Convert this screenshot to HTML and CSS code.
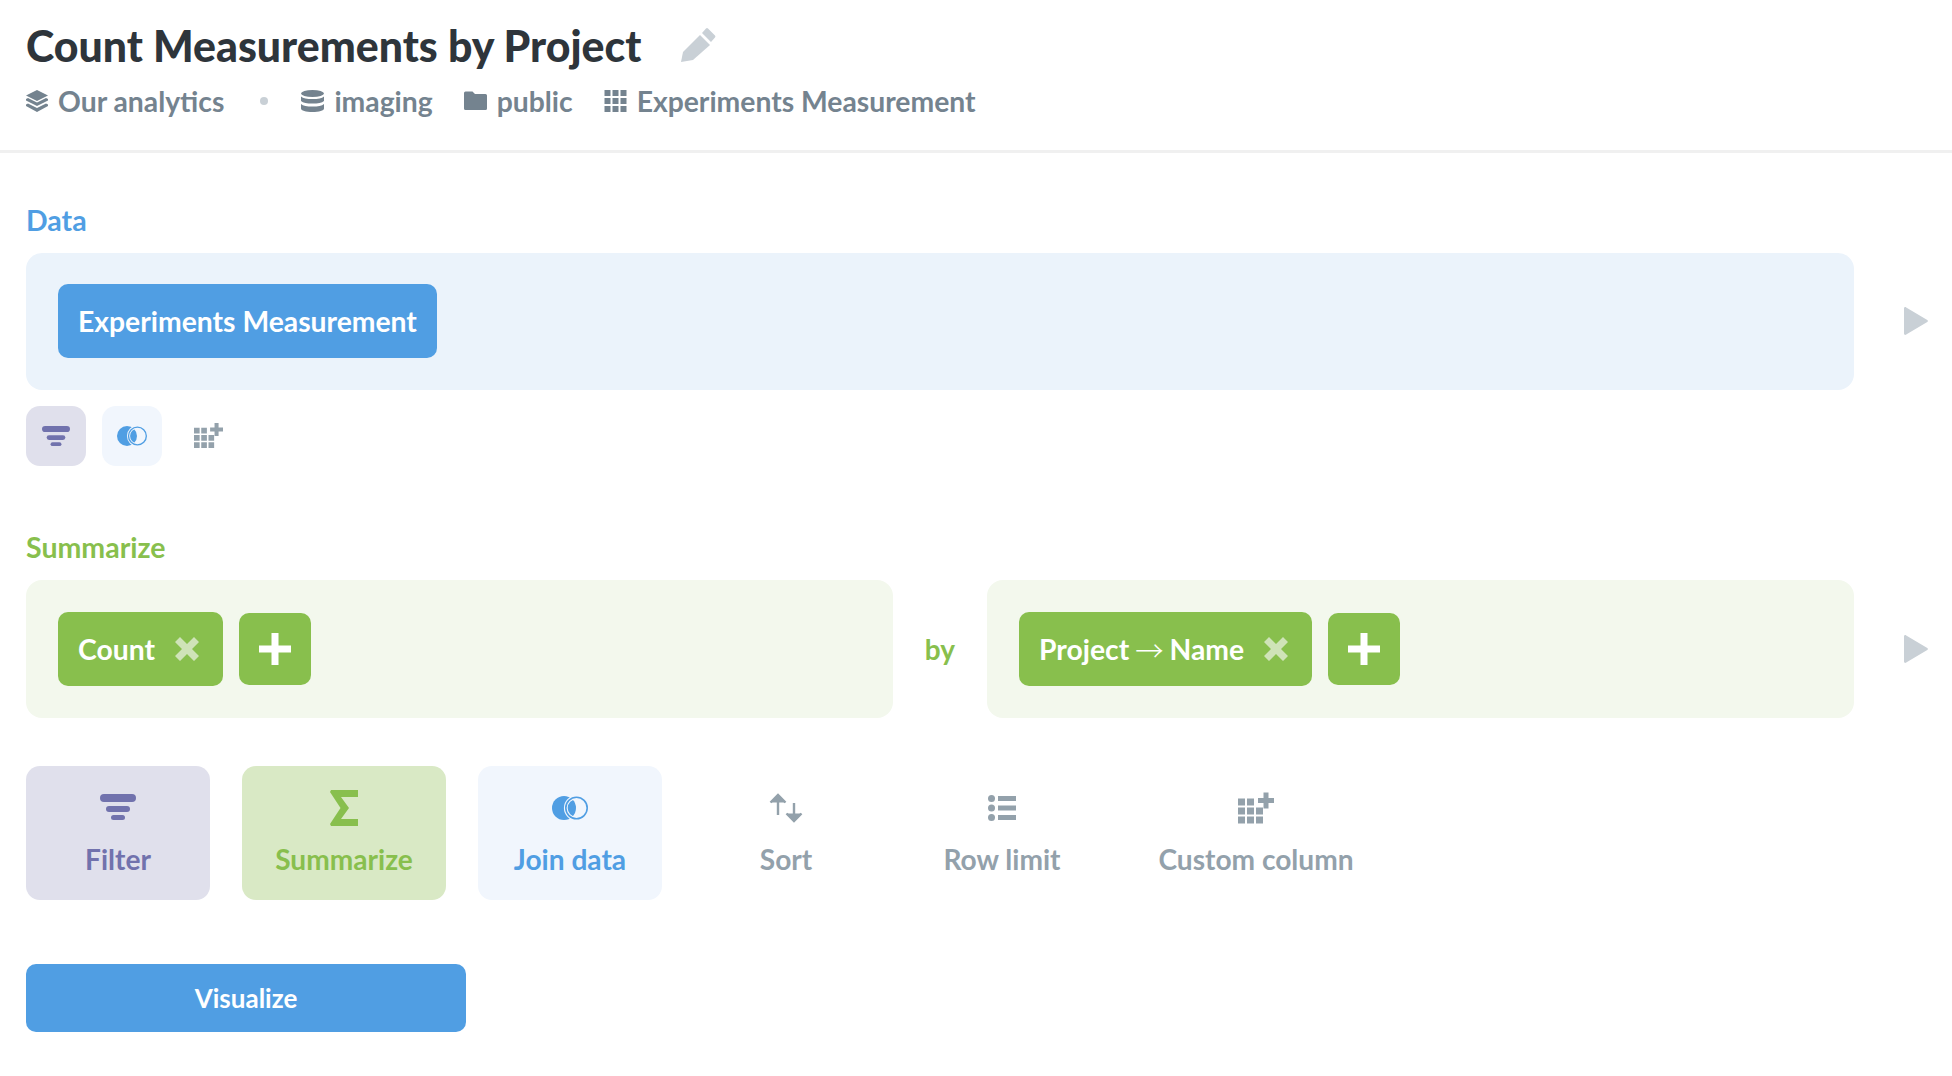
FILE: index.html
```html
<!DOCTYPE html>
<html lang="en">
<head>
<meta charset="utf-8">
<title>Count Measurements by Project</title>
<link rel="stylesheet" href="styles.css">
</head>
<body>
<svg class="defs" width="0" height="0" aria-hidden="true">
  <defs>
    <mask id="join-gap" maskUnits="userSpaceOnUse" x="0" y="0" width="36" height="24"><rect width="36" height="24" fill="#fff"/><circle cx="24.500" cy="12" r="10.700" fill="none" stroke="#000" stroke-width="3.800"/></mask>
    <symbol id="i-filter" viewBox="0 0 36 26"><rect x="0" y="0" width="36" height="8" rx="4"/><rect x="6" y="12" width="24" height="6" rx="3"/><rect x="11" y="21" width="14" height="5" rx="2.5"/></symbol>
    <symbol id="i-join" viewBox="0 0 36 24"><circle cx="12" cy="12" r="12" mask="url(#join-gap)"/><circle cx="24.500" cy="12" r="10.700" fill="none" stroke="currentColor" stroke-width="1.600"/></symbol>
    <symbol id="i-addcol" viewBox="0 0 36 31"><path d="M0 6h7v7H0zM9 6h7v7H9zM0 15h7v7H0zM9 15h7v7H9zM18 15h7v7h-7zM0 24h7v7H0zM9 24h7v7H9zM18 24h7v7h-7z"/><path d="M20 5.500h5.500V0h5v5.500H36v5h-5.500V16h-5v-5.500H20z"/></symbol>
    <symbol id="i-x" viewBox="0 0 24 24"><path d="M5 0L12 7 19 0 24 5 17 12 24 19 19 24 12 17 5 24 0 19 7 12 0 5z"/></symbol>
    <symbol id="i-plus" viewBox="0 0 32 32"><path d="M12.500 0h7v12.500H32v7H19.500V32h-7V19.500H0v-7h12.500z"/></symbol>
    <symbol id="i-play" viewBox="0 0 24 28"><path d="M0 1.500C0 .2 1.300-.4 2.200 .5L23.300 13a1.300 1.300 0 0 1 0 2L2.200 27.500C1.300 28.400 0 27.800 0 26.500z"/></symbol>
  </defs>
</svg>

<header class="head">
  <div class="title-row">
    <h1 class="title">Count Measurements by Project</h1>
    <svg class="pencil" viewBox="0 0 36 36"><path d="M1 35l2-10L20 8l10 10-17 15z"/><path d="M22 6l4-4.500a1.500 1.500 0 0 1 2 0l7 7a1.500 1.500 0 0 1 0 2L31 15z"/></svg>
  </div>
  <div class="crumbs">
    <span class="crumb crumb-db">
      <svg class="ci ci-first" viewBox="0 0 22 22"><path d="M11 0l11 5.500L11 11 0 5.500z"/><path d="M0 9l2-1 9 4.500L20 8l2 1v1.500L11 16 0 10.500z"/><path d="M0 14.500l2-1 9 4.500 9-4.500 2 1V16l-11 6-11-6z"/></svg>
      Our analytics
    </span>
    <span class="dot"></span>
    <span class="crumb">
      <svg class="ci" viewBox="0 0 23 22"><ellipse cx="11.500" cy="3.500" rx="11.500" ry="3.500"/><path d="M0 6.500c2 2 6 2.500 11.500 2.500S21 8.500 23 6.500V11c-2 2-6 2.500-11.500 2.500S2 13 0 11z"/><path d="M0 14c2 2 6 2.500 11.500 2.500S21 16 23 14v4.500c0 2-5 3.500-11.500 3.500S0 20.500 0 18.500z"/></svg>
      imaging
    </span>
    <span class="crumb">
      <svg class="ci" viewBox="0 0 23 22"><path d="M0 3a1.500 1.500 0 0 1 1.500-1.500h7l2.500 2.500h10.500A1.500 1.500 0 0 1 23 5.500v13a1.500 1.500 0 0 1-1.500 1.500h-20A1.500 1.500 0 0 1 0 18.500z"/></svg>
      public
    </span>
    <span class="crumb">
      <svg class="ci" viewBox="0 0 22 22"><path d="M0 0h6v6H0zM8 0h6v6H8zM16 0h6v6h-6zM0 8h6v6H0zM8 8h6v6H8zM16 8h6v6h-6zM0 16h6v6H0zM8 16h6v6H8zM16 16h6v6h-6z"/></svg>
      Experiments Measurement
    </span>
  </div>
</header>

<main class="body">
  <section class="step">
    <div class="step-label label-data c-blue">Data</div>
    <div class="step-row">
      <div class="panel p-blue">
        <button class="pill b-blue">Experiments Measurement</button>
      </div>
      <svg class="play"><use href="#i-play"/></svg>
    </div>
    <div class="mini-row">
      <span class="mini t-purple c-purple"><svg class="mi-filter"><use href="#i-filter"/></svg></span>
      <span class="mini t-blue c-blue"><svg class="mi-join"><use href="#i-join"/></svg></span>
      <span class="mini c-gray"><svg class="mi-add"><use href="#i-addcol"/></svg></span>
    </div>
  </section>

  <section class="step step-sum">
    <div class="step-label c-green">Summarize</div>
    <div class="step-row">
      <div class="sum-grid">
        <div class="panel p-green">
          <button class="pill b-green">Count<svg class="x"><use href="#i-x"/></svg></button>
          <button class="add b-green"><svg class="plus"><use href="#i-plus"/></svg></button>
        </div>
        <div class="by c-green">by</div>
        <div class="panel p-green">
          <button class="pill b-green">Project<span class="arrow">→</span>Name<svg class="x"><use href="#i-x"/></svg></button>
          <button class="add b-green"><svg class="plus"><use href="#i-plus"/></svg></button>
        </div>
      </div>
      <svg class="play"><use href="#i-play"/></svg>
    </div>
  </section>

  <div class="actions">
    <div class="action t-purple c-purple w-filter"><svg class="ai-filter"><use href="#i-filter"/></svg><span>Filter</span></div>
    <div class="action t-green c-green w-sum">
      <svg class="ai-sigma" viewBox="0 0 28 36"><path d="M1 0h27v7H11l8 11-8 11h17v7H1l-1-2L10.500 18 0 2z"/></svg>
      <span>Summarize</span>
    </div>
    <div class="action t-blue c-blue w-join"><svg class="ai-join"><use href="#i-join"/></svg><span>Join data</span></div>
    <div class="action c-gray w-sort">
      <svg class="ai-sort" viewBox="0 0 34 36" fill="none" stroke="currentColor" stroke-width="2.400"><path d="M9 23V3M1.500 10.500L9 3l7.500 7.500"/><path d="M25 11v18M17.500 21.500L25 29l7.500-7.500"/></svg>
      <span>Sort</span>
    </div>
    <div class="action c-gray w-limit">
      <svg class="ai-list" viewBox="0 0 28 26"><circle cx="3.500" cy="3.500" r="3.500"/><circle cx="3.500" cy="13" r="3.500"/><circle cx="3.500" cy="22.500" r="3.500"/><path d="M10 1h18v5H10zM10 10.500h18v5H10zM10 20h18v5H10z"/></svg>
      <span>Row limit</span>
    </div>
    <div class="action c-gray w-col"><svg class="ai-add"><use href="#i-addcol"/></svg><span>Custom column</span></div>
  </div>

  <button class="visualize">Visualize</button>
</main>
</body>
</html>
```

FILE: styles.css
```css
* { box-sizing: border-box; }
html, body { margin: 0; padding: 0; }
body {
  width: 1952px;
  height: 1076px;
  overflow: hidden;
  background: #fff;
  font-family: Lato, "Noto Sans", sans-serif;
  font-weight: 700;
}
button { font: inherit; border: 0; padding: 0; }
.defs { position: absolute; }
svg { fill: currentColor; display: block; }

.head {
  height: 153px;
  padding: 22px 26px 0;
  border-bottom: 3px solid #f0f0f0;
}
.title-row { display: flex; align-items: center; height: 48px; }
.title { margin: 0; font-size: 42.8px; line-height: 48px; font-weight: 900; color: #2e353b; }
.pencil { width: 36px; height: 36px; margin-left: 39px; margin-top: -2px; color: #c9d0d6; }
.crumbs { display: flex; align-items: center; margin-top: 15px; height: 32px; color: #74838f; font-size: 28.3px; }
.crumb { display: flex; align-items: center; gap: 10px; margin-right: 31px; }
.crumb-db { margin-right: 36px; }
.ci { width: 23px; height: 22px; flex: none; }
.ci-first { width: 22px; }
.dot { width: 8px; height: 8px; border-radius: 50%; background: #c9d0d6; margin-right: 33px; }

.body { width: 1952px; padding-left: 26px; }
.step { padding-top: 50px; }
.step-sum { padding-top: 64.5px; }
.step-label { font-size: 28.5px; line-height: 34px; margin-bottom: 16px; }
.label-data { margin-bottom: 15.5px; }
.c-blue { color: #509ee3; }
.c-green { color: #88bf4d; }
.c-purple { color: #7172ad; }
.c-gray { color: #93a1ab; }
.t-blue { background: #f1f6fd; }
.t-green { background: #d9e9c5; }
.t-purple { background: #e0e0ec; }
.b-blue { background: #509ee3; }
.b-green { background: #88bf4d; }

.step-row { display: flex; align-items: center; }
.play { width: 26px; height: 28px; margin-left: 49px; color: #c9d0d6; flex: none; }
.panel {
  height: 137px;
  border-radius: 16px;
  padding: 0 32px;
  display: flex;
  align-items: center;
  gap: 16px;
}
.step-row > .panel { width: 1828px; flex: none; }
.p-blue { background: #ebf3fb; }
.p-green { background: #f3f8ed; height: 138px; }
.sum-grid { width: 1828px; flex: none; display: grid; grid-template-columns: 867px 1fr 867px; align-items: center; }
.by { text-align: center; font-size: 28px; }

.pill {
  height: 74px;
  padding: 0 24px 0 20px;
  border-radius: 10px;
  color: #fff;
  font-size: 28.3px;
  display: flex;
  align-items: center;
}
.b-blue.pill { padding: 0 20px; }
.arrow { font-family: "Noto Sans CJK SC", sans-serif; font-weight: 300; margin: 0 6px; }
.x { width: 24px; height: 24px; margin-left: 20px; color: #cfe3b8; }
.add { width: 72px; height: 72px; border-radius: 10px; color: #fff; display: flex; align-items: center; justify-content: center; }
.plus { width: 32px; height: 32px; }

.mini-row { display: flex; gap: 16px; margin-top: 16px; }
.mini { width: 60px; height: 60px; border-radius: 14px; display: flex; align-items: center; justify-content: center; }
.mi-filter { width: 28px; height: 24px; }
.mi-join { width: 30px; height: 20px; }
.mi-add { width: 29px; height: 25px; }

.actions { display: flex; gap: 32px; margin-top: 48px; }
.action {
  height: 134px;
  width: 184px;
  border-radius: 14px;
  font-size: 28.1px;
  display: flex;
  flex-direction: column;
  align-items: center;
  padding-top: 25px;
}
.action svg { height: 32px; margin-top: 1px; margin-bottom: 18px; }
.action .ai-sigma { height: 36px; margin-top: -1px; margin-bottom: 16px; }
.action .ai-sort { height: 36px; margin-top: 1px; margin-bottom: 14px; }
.action .ai-filter { height: 30px; margin-top: 1px; margin-bottom: 20px; }
.w-sum { width: 204px; }
.w-limit { width: 184px; }
.w-col { width: 260px; }
.w-sort { width: 184px; }
.ai-filter { width: 36px; }
.ai-sigma { width: 28px; }
.ai-join { width: 36px; }
.ai-sort { width: 34px; }
.ai-list { width: 28px; }
.ai-add { width: 36px; }

.visualize {
  display: block;
  width: 440px;
  height: 68px;
  margin-top: 64px;
  border-radius: 10px;
  background: #509ee3;
  color: #fff;
  font-size: 26px;
}
```
